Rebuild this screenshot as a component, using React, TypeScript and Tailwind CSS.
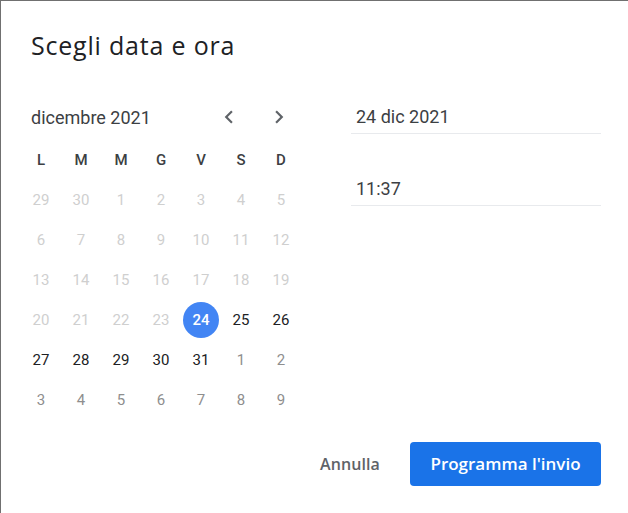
import React from "react";

const weekDays = ["L", "M", "M", "G", "V", "S", "D"];

type Day = { n: number; kind: "past" | "active" | "next" | "selected" };

const buildDays = (): Day[] => {
  const days: Day[] = [];
  days.push({ n: 29, kind: "past" }, { n: 30, kind: "past" });
  for (let i = 1; i <= 31; i++) {
    if (i < 24) days.push({ n: i, kind: "past" });
    else if (i === 24) days.push({ n: i, kind: "selected" });
    else days.push({ n: i, kind: "active" });
  }
  for (let i = 1; i <= 9; i++) days.push({ n: i, kind: "next" });
  return days;
};

const ChevronLeft = () => (
  <svg width="26" height="26" viewBox="0 0 24 24" fill="#5f6368">
    <path d="M15.41 7.41 14 6l-6 6 6 6 1.41-1.41L10.83 12z" />
  </svg>
);

const ChevronRight = () => (
  <svg width="26" height="26" viewBox="0 0 24 24" fill="#5f6368">
    <path d="M10 6 8.59 7.41 13.17 12l-4.58 4.59L10 18l6-6z" />
  </svg>
);

const dayClass = (kind: Day["kind"]) => {
  switch (kind) {
    case "past":
      return "text-[#cfcfcf]";
    case "next":
      return "text-[#8e8e8e]";
    case "selected":
      return "bg-[#4285f4] text-white font-medium";
    default:
      return "text-[#202124]";
  }
};

export default function App() {
  const days = buildDays();

  return (
    <div className="w-[628px] h-[513px] bg-white border-t border-l border-[#707070] font-['Roboto',sans-serif] overflow-hidden">
      {/* header */}
      <h1 className="pt-[28px] pl-[30px] text-[25px] leading-[32px] text-[#202124] font-['Open_Sans',sans-serif] tracking-[0.8px]">
        Scegli data e ora
      </h1>

      <div className="flex pl-[20px] mt-[39px]">
        {/* calendar */}
        <div className="w-[280px]">
          <div className="flex items-center justify-between h-[34px] pl-[10px] pr-[2px]">
            <span className="text-[18px] text-[#3c4043]">dicembre 2021</span>
            <div className="flex">
              <button className="w-[40px] h-[34px] flex items-center justify-center">
                <ChevronLeft />
              </button>
              <button className="w-[40px] h-[34px] flex items-center justify-center ml-[10px]">
                <ChevronRight />
              </button>
            </div>
          </div>

          <div className="grid grid-cols-7 mt-[6px]">
            {weekDays.map((d, i) => (
              <div
                key={i}
                className="h-[40px] flex items-center justify-center text-[15px] font-medium text-[#3c4043]"
              >
                {d}
              </div>
            ))}
            {days.map((d, i) => (
              <div key={i} className="h-[40px] flex items-center justify-center">
                <span
                  className={`w-[36px] h-[36px] rounded-full flex items-center justify-center text-[15px] ${dayClass(
                    d.kind
                  )}`}
                >
                  {d.n}
                </span>
              </div>
            ))}
          </div>
        </div>

        {/* date / time fields */}
        <div className="w-[250px] ml-[50px]">
          <div className="h-[34px] flex items-center pl-[5px] border-b border-[#e8eaed] text-[18px] text-[#3c4043]">
            24 dic 2021
          </div>
          <div className="h-[34px] mt-[38px] flex items-center pl-[5px] border-b border-[#e8eaed] text-[18px] text-[#3c4043]">
            11:37
          </div>
        </div>
      </div>

      <div className="flex justify-end items-center pr-[27px] mt-[22px]">
        <button className="h-[44px] px-[10px] mr-[20px] text-[16px] font-semibold text-[#5f6368] font-['Open_Sans',sans-serif] tracking-[0.1px]">
          Annulla
        </button>
        <button className="h-[44px] w-[191px] rounded-[4px] bg-[#1a73e8] text-white text-[17px] font-semibold font-['Open_Sans',sans-serif]">
          Programma l'invio
        </button>
      </div>
    </div>
  );
}
